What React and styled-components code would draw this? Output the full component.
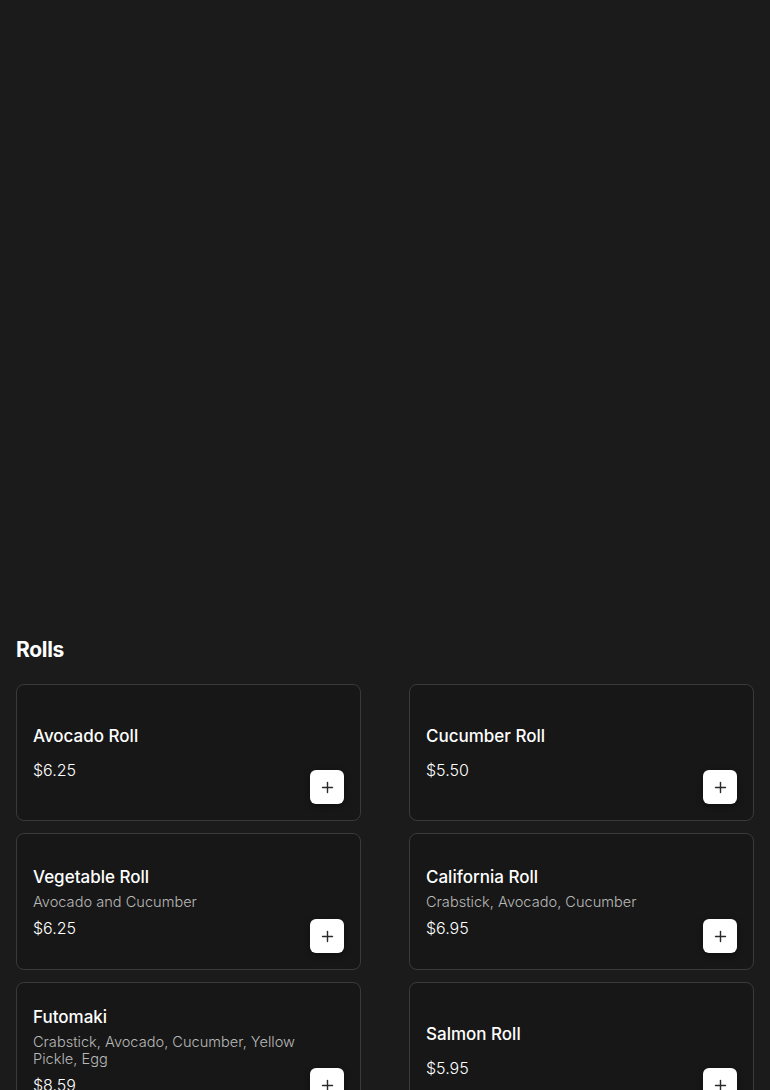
import React from 'react';
import styled, { createGlobalStyle } from 'styled-components';
import { Plus } from 'lucide-react';

const rolls = [
  { name: 'Avocado Roll', desc: '', price: '$6.25' },
  { name: 'Cucumber Roll', desc: '', price: '$5.50' },
  { name: 'Vegetable Roll', desc: 'Avocado and Cucumber', price: '$6.25' },
  { name: 'California Roll', desc: 'Crabstick, Avocado, Cucumber', price: '$6.95' },
  { name: 'Futomaki', desc: 'Crabstick, Avocado, Cucumber, Yellow Pickle, Egg', price: '$8.59' },
  { name: 'Salmon Roll', desc: '', price: '$5.95' },
];

const App = () => (
  <>
    <GlobalStyle />
    <Page>
      <Hero />
      <Section>
        <Heading>Rolls</Heading>
        <Grid>
          {rolls.map(item => (
            <Card key={item.name}>
              <Info>
                <Title>{item.name}</Title>
                <Desc>{item.desc}</Desc>
                <Price>{item.price}</Price>
              </Info>
              <AddButton aria-label={`Add ${item.name}`}>
                <Plus size={17} strokeWidth={2} />
              </AddButton>
            </Card>
          ))}
        </Grid>
      </Section>
    </Page>
  </>
);
export default App;

const GlobalStyle = createGlobalStyle`
  body {
    margin: 0;
    background: #1b1b1b;
    font-family: Inter, "Noto Sans", sans-serif;
    color: #fff;
  }
`;

const Page = styled.div`
  min-height: 1090px;
  background: #1b1b1b;
`;

const Hero = styled.div`
  height: 620px;
`;

const Section = styled.section`
  padding: 16px 16px 40px;
`;

const Heading = styled.h2`
  margin: 0 0 20px;
  font-size: 21px;
  line-height: 28px;
  font-weight: 700;
  letter-spacing: -0.3px;
`;

const Grid = styled.div`
  display: grid;
  grid-template-columns: 1fr 1fr;
  column-gap: 48px;
  row-gap: 12px;
`;

const Card = styled.div`
  box-sizing: border-box;
  height: 137px;
  padding: 16px;
  display: flex;
  align-items: center;
  gap: 10px;
  background: #171717;
  border: 1px solid #3a3a3a;
  border-radius: 8px;
`;

const Info = styled.div`
  flex: 1;
  min-width: 0;
  display: flex;
  flex-direction: column;
`;

const Title = styled.div`
  font-size: 17px;
  line-height: 22px;
  font-weight: 500;
  margin-bottom: 6px;
`;

const Desc = styled.div`
  font-size: 14.6px;
  line-height: 17px;
  font-weight: 300;
  color: #b8b8b8;
  margin-bottom: 7px;
`;

const Price = styled.div`
  font-size: 16px;
  line-height: 20px;
  font-weight: 300;
`;

const AddButton = styled.button`
  align-self: flex-end;
  flex-shrink: 0;
  width: 34px;
  height: 34px;
  padding: 0;
  display: flex;
  align-items: center;
  justify-content: center;
  background: #fff;
  color: #2a2a2a;
  border: none;
  border-radius: 6px;
  box-shadow: 0 2px 6px rgba(0, 0, 0, 0.4);
  cursor: pointer;
`;
